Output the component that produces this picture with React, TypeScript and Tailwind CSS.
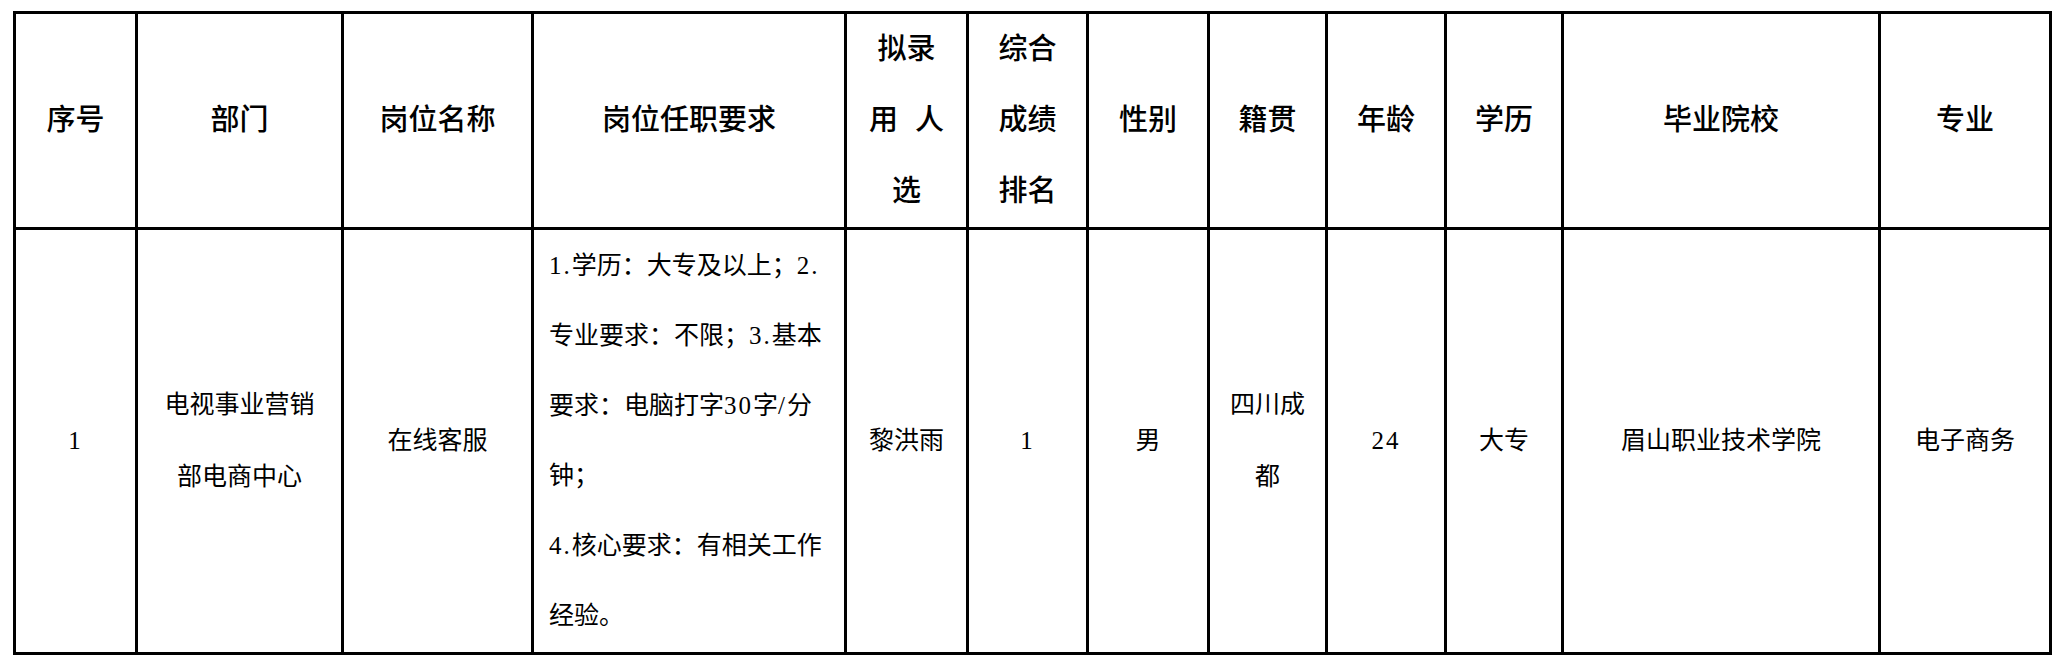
import React from "react";

type Col = { key: string; width: number; head: string[] };

const cols: Col[] = [
  { key: "no", width: 122, head: ["序号"] },
  { key: "dept", width: 206, head: ["部门"] },
  { key: "post", width: 190, head: ["岗位名称"] },
  { key: "req", width: 313, head: ["岗位任职要求"] },
  { key: "person", width: 122, head: ["拟录", "用 人", "选"] },
  { key: "rank", width: 120, head: ["综合", "成绩", "排名"] },
  { key: "sex", width: 121, head: ["性别"] },
  { key: "origin", width: 118, head: ["籍贯"] },
  { key: "age", width: 119, head: ["年龄"] },
  { key: "edu", width: 117, head: ["学历"] },
  { key: "school", width: 317, head: ["毕业院校"] },
  { key: "major", width: 171, head: ["专业"] },
];

const row: Record<string, string[]> = {
  no: ["1"],
  dept: ["电视事业营销", "部电商中心"],
  post: ["在线客服"],
  req: [
    "1.学历：大专及以上；2.",
    "专业要求：不限；3.基本",
    "要求：电脑打字30字/分",
    "钟；",
    "4.核心要求：有相关工作",
    "经验。",
  ],
  person: ["黎洪雨"],
  rank: ["1"],
  sex: ["男"],
  origin: ["四川成", "都"],
  age: ["24"],
  edu: ["大专"],
  school: ["眉山职业技术学院"],
  major: ["电子商务"],
};

// digits and ascii punctuation get the serif latin face, like the Song original
function Text({ text }: { text: string }) {
  const parts = text.split(/([0-9./]+)/);
  return (
    <>
      {parts.map((p, i) =>
        /^[0-9./]+$/.test(p) ? (
          <span
            key={i}
            className="tracking-[2px]"
            style={{ fontFamily: '"Liberation Serif", serif' }}
          >
            {p}
          </span>
        ) : (
          <React.Fragment key={i}>{p}</React.Fragment>
        )
      )}
    </>
  );
}

function Lines({ lines }: { lines: string[] }) {
  return (
    <>
      {lines.map((l, i) => (
        <div key={i} className="whitespace-nowrap">
          {l === "用 人" ? (
            <>
              用<span className="inline-block w-[17px]" />人
            </>
          ) : (
            <Text text={l} />
          )}
        </div>
      ))}
    </>
  );
}

export default function App() {
  return (
    <div
      className="w-[2052px] h-[658px] bg-white overflow-hidden pt-[11px] pl-[13px] text-black"
      style={{ fontFamily: '"Liberation Serif", "Noto Sans CJK SC", serif' }}
    >
      <table className="table-fixed border-collapse w-[2039px]">
        <colgroup>
          {cols.map((c) => (
            <col key={c.key} style={{ width: c.width }} />
          ))}
        </colgroup>
        <thead>
          <tr className="h-[214px]">
            {cols.map((c) => (
              <th
                key={c.key}
                className="border-[3px] border-black p-0 text-center align-middle text-[29px] leading-[71px] font-medium"
              >
                <Lines lines={c.head} />
              </th>
            ))}
          </tr>
        </thead>
        <tbody>
          <tr className="h-[425px]">
            {cols.map((c) => (
              <td
                key={c.key}
                className={
                  c.key === "req"
                    ? "border-[3px] border-black py-0 pl-[15px] pr-0 text-left align-middle text-[25px] leading-[70px]"
                    : "border-[3px] border-black p-0 text-center align-middle text-[25px] leading-[72px]"
                }
              >
                <Lines lines={row[c.key]} />
              </td>
            ))}
          </tr>
        </tbody>
      </table>
    </div>
  );
}
